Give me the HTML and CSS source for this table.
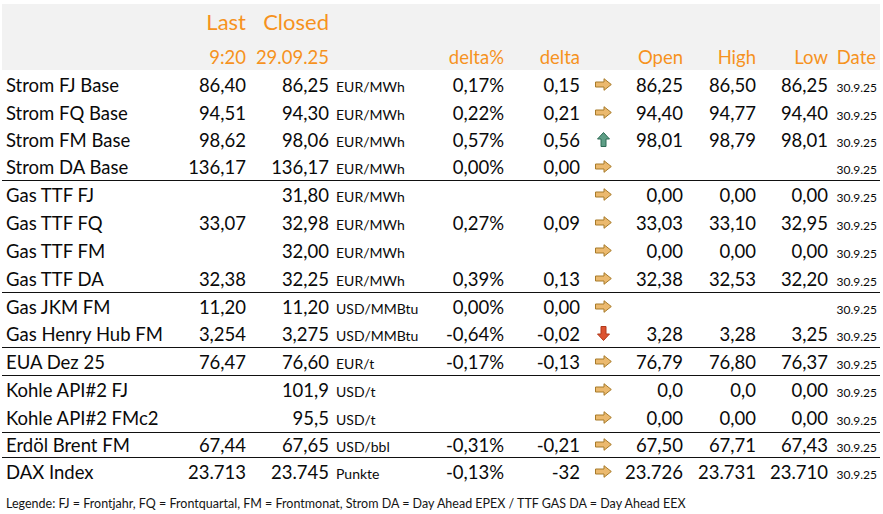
FILE: index.html
```html
<!DOCTYPE html>
<html lang="de">
<head>
<meta charset="utf-8">
<title>Marktdaten</title>
<link rel="stylesheet" href="styles.css">
</head>
<body>
<div class="page">
<svg width="0" height="0" class="defs">
  <defs>
    <symbol id="ar" viewBox="0 0 17 13"><path d="M0.5 4H9V0.7L16.3 6.5L9 12.3V9H0.5Z" fill="#ebb96e" stroke="#a77a28" stroke-width="1"/></symbol>
    <symbol id="au" viewBox="0 0 13 15"><path d="M6.5 0.5L12.5 7H9V14.5H4V7H0.5Z" fill="#5e9e86" stroke="#2d6a54" stroke-width="1"/></symbol>
    <symbol id="ad" viewBox="0 0 13 15"><path d="M6.5 14.5L12.5 8H9V0.5H4V8H0.5Z" fill="#dc5330" stroke="#b2391a" stroke-width="1"/></symbol>
  </defs>
</svg>
<table class="grid">
  <colgroup>
    <col class="c-name"><col class="c-last"><col class="c-closed"><col class="c-unit"><col class="c-dp"><col class="c-d"><col class="c-ar"><col class="c-open"><col class="c-high"><col class="c-low"><col class="c-date">
  </colgroup>
  <thead>
    <tr class="h1">
      <th></th><th class="r">Last</th><th class="r">Closed</th><th></th><th></th><th></th><th></th><th></th><th></th><th></th><th></th>
    </tr>
    <tr class="h2">
      <th></th><th class="r">9:20</th><th class="r">29.09.25</th><th></th><th class="r">delta%</th><th class="r">delta</th><th></th><th class="r">Open</th><th class="r">High</th><th class="r">Low</th><th class="r">Date</th>
    </tr>
  </thead>
  <tbody>
    <tr class="h28"><td class="n">Strom FJ Base</td><td class="r">86,40</td><td class="r">86,25</td><td class="u">EUR/MWh</td><td class="r">0,17%</td><td class="r">0,15</td><td class="a"><svg class="ir"><use href="#ar"/></svg></td><td class="r">86,25</td><td class="r">86,50</td><td class="r">86,25</td><td class="dt">30.9.25</td></tr>
    <tr class="h27"><td class="n">Strom FQ Base</td><td class="r">94,51</td><td class="r">94,30</td><td class="u">EUR/MWh</td><td class="r">0,22%</td><td class="r">0,21</td><td class="a"><svg class="ir"><use href="#ar"/></svg></td><td class="r">94,40</td><td class="r">94,77</td><td class="r">94,40</td><td class="dt">30.9.25</td></tr>
    <tr class="h27"><td class="n">Strom FM Base</td><td class="r">98,62</td><td class="r">98,06</td><td class="u">EUR/MWh</td><td class="r">0,57%</td><td class="r">0,56</td><td class="a"><svg class="iv"><use href="#au"/></svg></td><td class="r">98,01</td><td class="r">98,79</td><td class="r">98,01</td><td class="dt">30.9.25</td></tr>
    <tr class="h28"><td class="n">Strom DA Base</td><td class="r">136,17</td><td class="r">136,17</td><td class="u">EUR/MWh</td><td class="r">0,00%</td><td class="r">0,00</td><td class="a"><svg class="ir"><use href="#ar"/></svg></td><td></td><td></td><td></td><td class="dt">30.9.25</td></tr>
    <tr class="h28 g"><td class="n">Gas TTF FJ</td><td></td><td class="r">31,80</td><td class="u">EUR/MWh</td><td></td><td></td><td class="a"><svg class="ir"><use href="#ar"/></svg></td><td class="r">0,00</td><td class="r">0,00</td><td class="r">0,00</td><td class="dt">30.9.25</td></tr>
    <tr class="h28"><td class="n">Gas TTF FQ</td><td class="r">33,07</td><td class="r">32,98</td><td class="u">EUR/MWh</td><td class="r">0,27%</td><td class="r">0,09</td><td class="a"><svg class="ir"><use href="#ar"/></svg></td><td class="r">33,03</td><td class="r">33,10</td><td class="r">32,95</td><td class="dt">30.9.25</td></tr>
    <tr class="h28"><td class="n">Gas TTF FM</td><td></td><td class="r">32,00</td><td class="u">EUR/MWh</td><td></td><td></td><td class="a"><svg class="ir"><use href="#ar"/></svg></td><td class="r">0,00</td><td class="r">0,00</td><td class="r">0,00</td><td class="dt">30.9.25</td></tr>
    <tr class="h28"><td class="n">Gas TTF DA</td><td class="r">32,38</td><td class="r">32,25</td><td class="u">EUR/MWh</td><td class="r">0,39%</td><td class="r">0,13</td><td class="a"><svg class="ir"><use href="#ar"/></svg></td><td class="r">32,38</td><td class="r">32,53</td><td class="r">32,20</td><td class="dt">30.9.25</td></tr>
    <tr class="h27 g"><td class="n">Gas JKM FM</td><td class="r">11,20</td><td class="r">11,20</td><td class="u">USD/MMBtu</td><td class="r">0,00%</td><td class="r">0,00</td><td class="a"><svg class="ir"><use href="#ar"/></svg></td><td></td><td></td><td></td><td class="dt">30.9.25</td></tr>
    <tr class="h28"><td class="n">Gas Henry Hub FM</td><td class="r">3,254</td><td class="r">3,275</td><td class="u">USD/MMBtu</td><td class="r">-0,64%</td><td class="r">-0,02</td><td class="a"><svg class="iv"><use href="#ad"/></svg></td><td class="r">3,28</td><td class="r">3,28</td><td class="r">3,25</td><td class="dt">30.9.25</td></tr>
    <tr class="h28 g"><td class="n">EUA Dez 25</td><td class="r">76,47</td><td class="r">76,60</td><td class="u">EUR/t</td><td class="r">-0,17%</td><td class="r">-0,13</td><td class="a"><svg class="ir"><use href="#ar"/></svg></td><td class="r">76,79</td><td class="r">76,80</td><td class="r">76,37</td><td class="dt">30.9.25</td></tr>
    <tr class="h28 g"><td class="n">Kohle API#2 FJ</td><td></td><td class="r">101,9</td><td class="u">USD/t</td><td></td><td></td><td class="a"><svg class="ir"><use href="#ar"/></svg></td><td class="r">0,0</td><td class="r">0,0</td><td class="r">0,00</td><td class="dt">30.9.25</td></tr>
    <tr class="h29"><td class="n">Kohle API#2 FMc2</td><td></td><td class="r">95,5</td><td class="u">USD/t</td><td></td><td></td><td class="a"><svg class="ir"><use href="#ar"/></svg></td><td class="r">0,00</td><td class="r">0,00</td><td class="r">0,00</td><td class="dt">30.9.25</td></tr>
    <tr class="h25 g"><td class="n">Erdöl Brent FM</td><td class="r">67,44</td><td class="r">67,65</td><td class="u">USD/bbl</td><td class="r">-0,31%</td><td class="r">-0,21</td><td class="a"><svg class="ir"><use href="#ar"/></svg></td><td class="r">67,50</td><td class="r">67,71</td><td class="r">67,43</td><td class="dt">30.9.25</td></tr>
    <tr class="h28 g"><td class="n">DAX Index</td><td class="r">23.713</td><td class="r">23.745</td><td class="u">Punkte</td><td class="r">-0,13%</td><td class="r">-32</td><td class="a"><svg class="ir"><use href="#ar"/></svg></td><td class="r">23.726</td><td class="r">23.731</td><td class="r">23.710</td><td class="dt">30.9.25</td></tr>
  </tbody>
</table>
<p class="legend">Legende: FJ = Frontjahr, FQ = Frontquartal, FM = Frontmonat, Strom DA = Day Ahead EPEX / TTF GAS DA = Day Ahead EEX</p>
</div>
</body>
</html>
```
FILE: styles.css
```css
html, body {
  margin: 0;
  padding: 0;
  background: #ffffff;
}
body {
  font-family: Lato, "Open Sans", "Liberation Sans", sans-serif;
  color: #0a0a0a;
}
.defs {
  position: absolute;
  width: 0;
  height: 0;
}
.page {
  padding: 4px 3px 0 2px;
}
.grid {
  border-collapse: separate;
  border-spacing: 0;
  table-layout: fixed;
  width: 878px;
}
.c-name { width: 168px; }
.c-last { width: 80px; }
.c-closed { width: 83px; }
.c-unit { width: 87px; }
.c-dp { width: 88px; }
.c-d { width: 76px; }
.c-ar { width: 38px; }
.c-open { width: 65px; }
.c-high { width: 73px; }
.c-low { width: 72px; }
.c-date { width: 48px; }

th, td {
  padding: 0;
  white-space: nowrap;
}
th {
  background: #f2f2f2;
  color: #f6921e;
  font-weight: normal;
}
.h1 th {
  height: 36px;
  line-height: 36px;
  font-size: 22px;
  vertical-align: top;
}
.h2 th {
  height: 26px;
  line-height: 26px;
  padding-top: 4px;
  font-size: 18.5px;
  vertical-align: top;
}
.r { text-align: right; padding-right: 4px; }
th.r { padding-right: 4px; }

td {
  font-size: 18.5px;
  line-height: 18px;
  vertical-align: baseline;
  padding-top: 6px;
}
tr.h25 { height: 25px; }
tr.h27 { height: 27px; }
tr.h28 { height: 28px; }
tr.h29 { height: 29px; }
tr.h25 td { padding-top: 4px; }
tr.g td { box-shadow: inset 0 1px 0 #111; }

td.n { padding-left: 4px; text-align: left; }
td.u {
  font-size: 14px;
  padding-left: 3px;
}
td.dt {
  font-size: 12px;
  text-align: right;
  padding-right: 3px;
}
td.a {
  text-align: center;
}
.ir { width: 17px; height: 13px; vertical-align: 1.5px; }
.iv { width: 13px; height: 15px; vertical-align: 0.5px; }

.legend {
  margin: 11px 0 0 4px;
  font-size: 12.5px;
  line-height: 16px;
  color: #141414;
}
```
